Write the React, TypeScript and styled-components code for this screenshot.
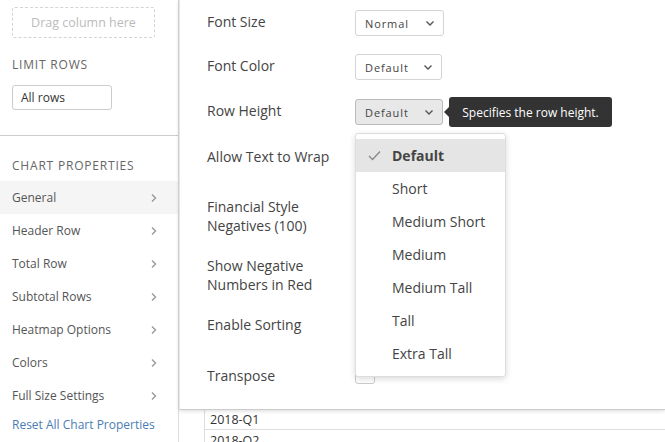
import React from 'react';
import styled, { createGlobalStyle } from 'styled-components';

const Global = createGlobalStyle`
  body { margin: 0; font-family: "Open Sans", "Liberation Sans", sans-serif; background: #fff; color: #444; }
  * { box-sizing: border-box; }
`;

const Page = styled.div`
  display: flex;
  width: 665px;
  height: 442px;
  overflow: hidden;
  position: relative;
`;

const Sidebar = styled.div`
  width: 179px;
  flex-shrink: 0;
  border-right: 1px solid #ddd;
  display: flex;
  flex-direction: column;
`;

const DropZone = styled.div`
  margin: 7px 0 0 12px;
  width: 143px;
  height: 31px;
  border: 1px dashed #d4d4d4;
  border-radius: 3px;
  color: #bbb;
  font-size: 12.5px;
  display: flex;
  align-items: center;
  justify-content: center;
`;

const SectionTitle = styled.div<{ $top: number }>`
  margin: ${p => p.$top}px 0 0 12px;
  font-size: 12px;
  letter-spacing: 0.8px;
  color: #666;
  text-transform: uppercase;
`;

const LimitInput = styled.div`
  margin: 12px 0 0 12px;
  width: 100px;
  height: 25px;
  border: 1px solid #ccc;
  border-radius: 3px;
  font-size: 12px;
  color: #333;
  padding-left: 8px;
  display: flex;
  align-items: center;
`;

const Divider = styled.div`
  margin-top: 25px;
  border-top: 1px solid #ccc;
`;

const MenuList = styled.div`
  margin-top: 7px;
  display: flex;
  flex-direction: column;
`;

const MenuItem = styled.div<{ $active?: boolean }>`
  height: 33px;
  padding: 0 19px 0 12px;
  display: flex;
  align-items: center;
  justify-content: space-between;
  font-size: 12px;
  color: #555;
  background: ${p => (p.$active ? '#f5f5f5' : 'transparent')};
`;

const ResetLink = styled.div`
  margin: 4px 0 0 12px;
  font-size: 12px;
  color: #4a7db3;
`;

const Main = styled.div`
  flex: 1;
  position: relative;
`;

const Table = styled.div`
  margin: 409px 0 0 25px;
  border-left: 1px solid #ddd;
`;

const TableRow = styled.div`
  height: 21px;
  border-bottom: 1px solid #ddd;
  padding-left: 5px;
  font-size: 12.5px;
  color: #333;
  display: flex;
  align-items: center;
`;

const Panel = styled.div`
  position: absolute;
  left: 0;
  top: 0;
  right: 0;
  height: 410px;
  background: #fff;
  border-bottom: 1px solid #ccc;
  border-left: 1px solid #e5e5e5;
  box-shadow: 0 1px 4px rgba(0, 0, 0, 0.15);
  padding: 10px 0 0 27px;
`;

const FieldRow = styled.div<{ $h: number }>`
  height: ${p => p.$h}px;
  display: grid;
  grid-template-columns: 148px auto;
  align-items: start;
`;

const Label = styled.div`
  font-size: 14px;
  color: #444;
  line-height: 19px;
  padding-top: 2px;
`;

const Select = styled.div<{ $w: number; $pressed?: boolean }>`
  width: ${p => p.$w}px;
  height: 26px;
  border: 1px solid ${p => (p.$pressed ? '#bbb' : '#d4d4d4')};
  border-radius: 3px;
  background: ${p => (p.$pressed ? '#e8e8e8' : '#fff')};
  display: flex;
  align-items: center;
  justify-content: space-between;
  padding: 0 8px 0 9px;
  font-size: 11px;
  letter-spacing: 0.9px;
  color: #444;
  position: relative;
`;

const Check = styled.div`
  width: 20px;
  height: 20px;
  border: 1px solid #ccc;
  border-radius: 3px;
`;

const Tooltip = styled.div`
  position: absolute;
  left: 93px;
  top: -3px;
  width: 163px;
  height: 30px;
  background: #333;
  border-radius: 3px;
  color: #fff;
  font-size: 12px;
  letter-spacing: 0;
  display: flex;
  align-items: center;
  justify-content: center;
  white-space: nowrap;
  &::before {
    content: '';
    position: absolute;
    left: -5px;
    top: 10px;
    border-top: 5px solid transparent;
    border-bottom: 5px solid transparent;
    border-right: 5px solid #333;
  }
`;

const Menu = styled.div`
  position: absolute;
  left: 175px;
  top: 133px;
  width: 151px;
  background: #fff;
  border: 1px solid #ddd;
  border-radius: 3px;
  box-shadow: 0 2px 6px rgba(0, 0, 0, 0.15);
  padding: 5px 0 6px;
  z-index: 2;
`;

const Option = styled.div<{ $selected?: boolean }>`
  height: 33px;
  display: flex;
  align-items: center;
  padding-left: 36px;
  position: relative;
  font-size: 14px;
  color: #444;
  font-weight: ${p => (p.$selected ? 700 : 400)};
  background: ${p => (p.$selected ? '#e5e5e5' : 'transparent')};
`;

const Tick = styled.svg`
  position: absolute;
  left: 12px;
  top: 11px;
`;

const Chevron = ({ color = '#999' }: { color?: string }) => (
  <svg width="10" height="10" viewBox="0 0 10 10">
    <path d="M3 1.5 L6.5 5 L3 8.5" fill="none" stroke={color} strokeWidth="1.4" />
  </svg>
);

const Caret = () => (
  <svg width="10" height="7" viewBox="0 0 10 7">
    <path d="M1.5 1.5 L5 5 L8.5 1.5" fill="none" stroke="#555" strokeWidth="1.4" />
  </svg>
);

const menu = ['General', 'Header Row', 'Total Row', 'Subtotal Rows', 'Heatmap Options', 'Colors', 'Full Size Settings'];
const options = ['Default', 'Short', 'Medium Short', 'Medium', 'Medium Tall', 'Tall', 'Extra Tall'];

const App: React.FC = () => (
  <Page>
    <Global />
    <Sidebar>
      <DropZone>Drag column here</DropZone>
      <SectionTitle $top={18}>Limit Rows</SectionTitle>
      <LimitInput>All rows</LimitInput>
      <Divider />
      <SectionTitle $top={21}>Chart Properties</SectionTitle>
      <MenuList>
        {menu.map((m, i) => (
          <MenuItem key={m} $active={i === 0}>
            {m}
            <Chevron />
          </MenuItem>
        ))}
      </MenuList>
      <ResetLink>Reset All Chart Properties</ResetLink>
    </Sidebar>
    <Main>
      <Table>
        <TableRow>2018-Q1</TableRow>
        <TableRow>2018-Q2</TableRow>
      </Table>
      <Panel>
        <FieldRow $h={44}>
          <Label>Font Size</Label>
          <Select $w={89}>Normal <Caret /></Select>
        </FieldRow>
        <FieldRow $h={45}>
          <Label>Font Color</Label>
          <Select $w={87}>Default <Caret /></Select>
        </FieldRow>
        <FieldRow $h={46}>
          <Label>Row Height</Label>
          <Select $w={88} $pressed>
            Default <Caret />
            <Tooltip>Specifies the row height.</Tooltip>
          </Select>
        </FieldRow>
        <FieldRow $h={50}>
          <Label>Allow Text to Wrap</Label>
          <Check />
        </FieldRow>
        <FieldRow $h={59}>
          <Label>Financial Style<br />Negatives (100)</Label>
          <Check />
        </FieldRow>
        <FieldRow $h={59}>
          <Label>Show Negative<br />Numbers in Red</Label>
          <Check />
        </FieldRow>
        <FieldRow $h={51}>
          <Label>Enable Sorting</Label>
          <Check />
        </FieldRow>
        <FieldRow $h={40}>
          <Label>Transpose</Label>
          <Check />
        </FieldRow>
        <Menu>
          {options.map((o, i) => (
            <Option key={o} $selected={i === 0}>
              {i === 0 && (
                <Tick width="13" height="11" viewBox="0 0 13 11">
                  <path d="M1 6 L4.5 9.5 L12 1.5" fill="none" stroke="#888" strokeWidth="1.3" />
                </Tick>
              )}
              {o}
            </Option>
          ))}
        </Menu>
      </Panel>
    </Main>
  </Page>
);

export default App;
